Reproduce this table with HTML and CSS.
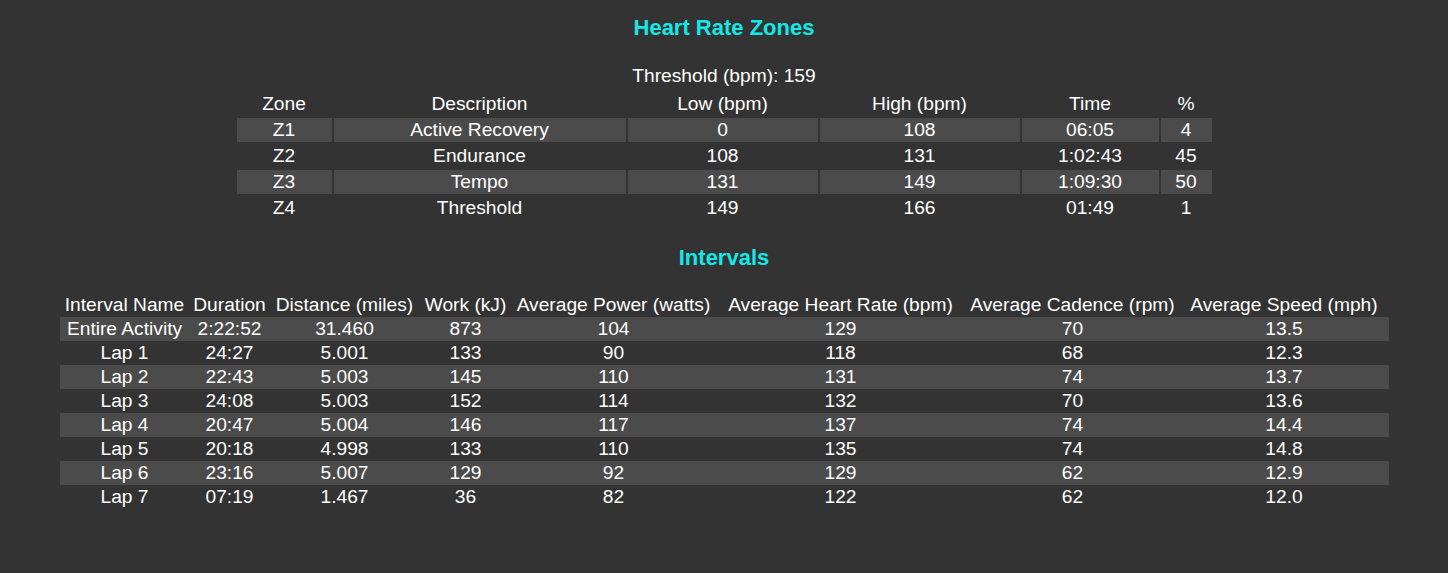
FILE: index.html
```html
<!DOCTYPE html>
<html>
<head>
<meta charset="utf-8">
<title>Heart Rate Zones</title>
<link rel="stylesheet" href="styles.css">
</head>
<body>
<h2 class="title">Heart Rate Zones</h2>
<p class="threshold">Threshold (bpm): 159</p>
<table class="zones">
  <colgroup>
    <col class="c-zone"><col class="c-desc"><col class="c-low"><col class="c-high"><col class="c-time"><col class="c-pct">
  </colgroup>
  <thead>
    <tr><th>Zone</th><th>Description</th><th>Low (bpm)</th><th>High (bpm)</th><th>Time</th><th>%</th></tr>
  </thead>
  <tbody>
    <tr class="stripe"><td>Z1</td><td>Active Recovery</td><td>0</td><td>108</td><td>06:05</td><td>4</td></tr>
    <tr><td>Z2</td><td>Endurance</td><td>108</td><td>131</td><td>1:02:43</td><td>45</td></tr>
    <tr class="stripe"><td>Z3</td><td>Tempo</td><td>131</td><td>149</td><td>1:09:30</td><td>50</td></tr>
    <tr><td>Z4</td><td>Threshold</td><td>149</td><td>166</td><td>01:49</td><td>1</td></tr>
  </tbody>
</table>
<h2 class="title title-intervals">Intervals</h2>
<table class="intervals">
  <colgroup>
    <col class="i-name"><col class="i-dur"><col class="i-dist"><col class="i-work"><col class="i-pow"><col class="i-hr"><col class="i-cad"><col class="i-spd">
  </colgroup>
  <thead>
    <tr><th>Interval Name</th><th>Duration</th><th>Distance (miles)</th><th>Work (kJ)</th><th>Average Power (watts)</th><th>Average Heart Rate (bpm)</th><th>Average Cadence (rpm)</th><th>Average Speed (mph)</th></tr>
  </thead>
  <tbody>
    <tr class="stripe"><td>Entire Activity</td><td>2:22:52</td><td>31.460</td><td>873</td><td>104</td><td>129</td><td>70</td><td>13.5</td></tr>
    <tr><td>Lap 1</td><td>24:27</td><td>5.001</td><td>133</td><td>90</td><td>118</td><td>68</td><td>12.3</td></tr>
    <tr class="stripe"><td>Lap 2</td><td>22:43</td><td>5.003</td><td>145</td><td>110</td><td>131</td><td>74</td><td>13.7</td></tr>
    <tr><td>Lap 3</td><td>24:08</td><td>5.003</td><td>152</td><td>114</td><td>132</td><td>70</td><td>13.6</td></tr>
    <tr class="stripe"><td>Lap 4</td><td>20:47</td><td>5.004</td><td>146</td><td>117</td><td>137</td><td>74</td><td>14.4</td></tr>
    <tr><td>Lap 5</td><td>20:18</td><td>4.998</td><td>133</td><td>110</td><td>135</td><td>74</td><td>14.8</td></tr>
    <tr class="stripe"><td>Lap 6</td><td>23:16</td><td>5.007</td><td>129</td><td>92</td><td>129</td><td>62</td><td>12.9</td></tr>
    <tr><td>Lap 7</td><td>07:19</td><td>1.467</td><td>36</td><td>82</td><td>122</td><td>62</td><td>12.0</td></tr>
  </tbody>
</table>
</body>
</html>
```
FILE: styles.css
```css
html, body {
  margin: 0;
  padding: 0;
  background: #333333;
}
body {
  color: #ffffff;
  font-family: "Liberation Sans", Arial, sans-serif;
  font-size: 19.2px;
  padding-top: 15px;
}
.title {
  margin: 0;
  text-align: center;
  color: #14e8e8;
  font-size: 22px;
  font-weight: bold;
  line-height: 26px;
}
.title-intervals {
  margin-top: 23px;
}
.threshold {
  margin: 23px 0 0;
  text-align: center;
  line-height: 24px;
}
table {
  margin-left: auto;
  margin-right: auto;
  table-layout: fixed;
}
th, td {
  padding: 0;
  height: 24px;
  line-height: 24px;
  text-align: center;
  font-weight: normal;
  white-space: nowrap;
}
.zones {
  margin-top: 2px;
  border-collapse: separate;
  border-spacing: 2px;
  width: 979px;
}
.zones .stripe td {
  background: #4b4b4b;
}
.c-zone { width: 95px; }
.c-desc { width: 292px; }
.c-low { width: 190px; }
.c-high { width: 200px; }
.c-time { width: 137px; }
.c-pct { width: 51px; }

.intervals {
  margin-top: 22px;
  border-collapse: collapse;
  width: 1329px;
}
.intervals .stripe td {
  background: #4b4b4b;
}
.i-name { width: 130px; }
.i-dur { width: 80px; }
.i-dist { width: 150px; }
.i-work { width: 92px; }
.i-pow { width: 204px; }
.i-hr { width: 250px; }
.i-cad { width: 214px; }
.i-spd { width: 209px; }
```
